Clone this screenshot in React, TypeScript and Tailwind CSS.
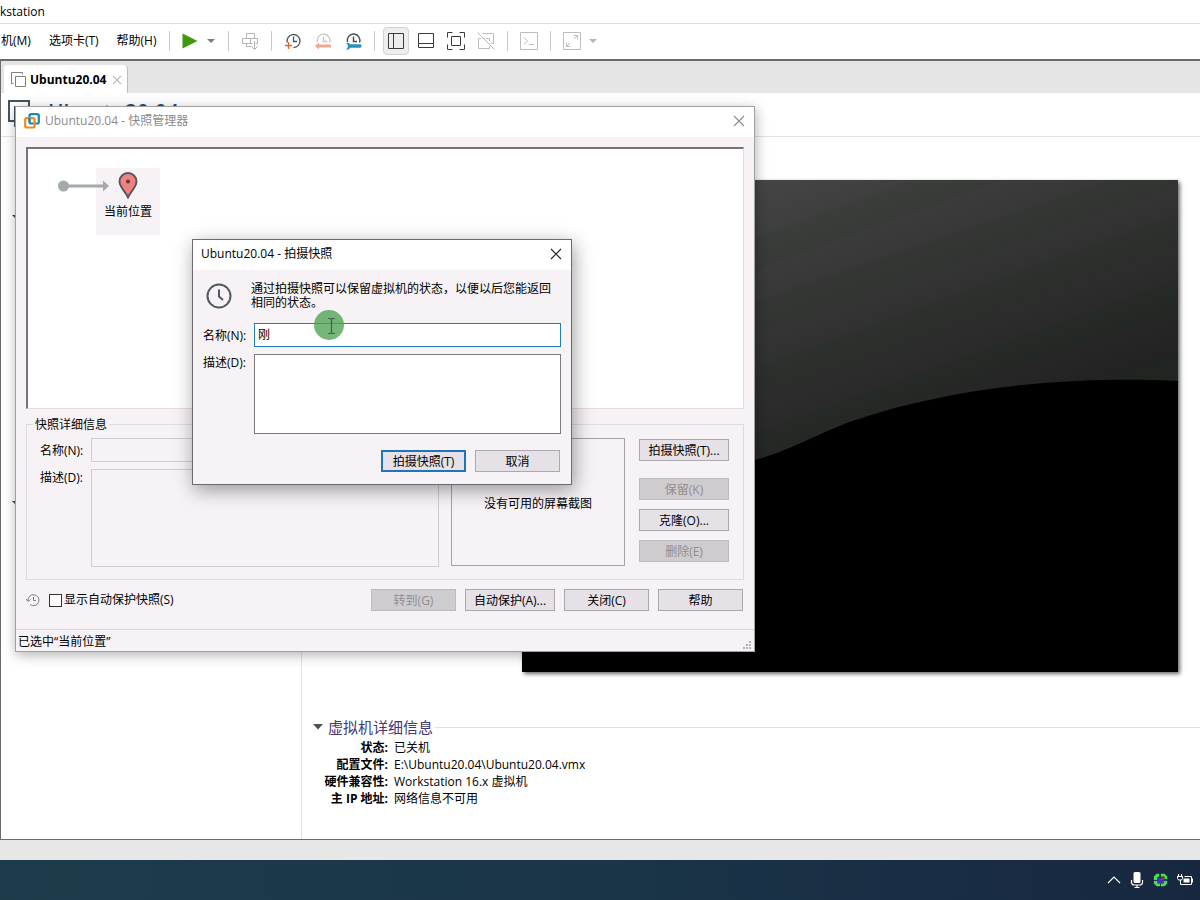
import type { ReactNode } from 'react';

const FONT = "font-['Open_Sans','Noto_Sans_CJK_SC',sans-serif]";

function Separator() {
  return <span className="mx-1.5 h-5 w-px shrink-0 bg-[#c9c9c9]" />;
}

function ToolButton({ label, active, children }: { label: string; active?: boolean; children: ReactNode }) {
  return (
    <span className="flex w-[30px] shrink-0 justify-center">
      <button
        aria-label={label}
        className={
          active
            ? 'flex h-7 w-[26px] items-center justify-center rounded border border-[#d2d2d2] bg-[#ededed]'
            : 'flex h-7 w-[26px] items-center justify-center'
        }
      >
        {children}
      </button>
    </span>
  );
}

function Icon({ stroke, children }: { stroke: string; children: ReactNode }) {
  return (
    <svg width="20" height="20" viewBox="0 0 20 20" fill="none" stroke={stroke} className="shrink-0">
      {children}
    </svg>
  );
}

function Caret({ color }: { color: string }) {
  return (
    <svg width="8" height="4" viewBox="0 0 8 4">
      <path d="M0 0h8L4 4z" fill={color} />
    </svg>
  );
}

function Toolbar() {
  return (
    <nav className="flex h-9 shrink-0 items-center border-t border-[#dedede] bg-white pb-px">
      <button className="pl-px">机(M)</button>
      <button className="ml-[18px]">选项卡(T)</button>
      <button className="ml-[18px]">帮助(H)</button>
      <span className="ml-3 h-5 w-px shrink-0 bg-[#c9c9c9]" />
      <button aria-label="启动" className="pl-3">
        <svg width="16" height="16" viewBox="0 0 16 16">
          <path d="M0.500 0.500v15L15.500 8z" fill="#3f9a0a" />
        </svg>
      </button>
      <button aria-label="电源选项" className="flex w-6 justify-center pl-0.5">
        <Caret color="#7d7d7d" />
      </button>
      <Separator />
      <ToolButton label="发送">
        <Icon stroke="#b5b5b5">
          <path d="M6.500 7.500v-5h8v5M12.500 12.500h-10v-5h15v5h-2M10.500 7.500v5M6.500 12.500v3h5M14.500 10v8M11.500 15.500l3 3 3-3" />
        </Icon>
      </ToolButton>
      <Separator />
      <ToolButton label="拍摄快照">
        <Icon stroke="#4d5258">
          <path d="M4.200 11.500A6.500 6.500 0 1 1 10.500 16.500" strokeWidth="1.300" />
          <path d="M10.500 5.500v5H14" strokeWidth="1.300" />
          <path d="M5.500 11v7M2 14.500h7" stroke="#e2632f" strokeWidth="1.400" />
        </Icon>
      </ToolButton>
      <ToolButton label="恢复快照">
        <Icon stroke="#c2c6c9">
          <path d="M4.500 11A6.300 6.300 0 1 1 16.500 11.500" strokeWidth="1.300" />
          <path d="M10.500 5.500v5H14" strokeWidth="1.300" />
          <path d="M2 15l4-3.500v2h12v3H6v2z" fill="#f2a78f" stroke="none" />
        </Icon>
      </ToolButton>
      <ToolButton label="管理快照">
        <Icon stroke="#3d4a52">
          <path d="M4.500 11A6.300 6.300 0 1 1 16.500 11.500" strokeWidth="1.400" />
          <path d="M10.500 5.500v5H14" strokeWidth="1.400" />
          <path d="M3 12h2.500l2 1.300H17a1.700 1.700 0 0 1 0 3.400H7.500L5.500 18.500H3l1.800-2v-2.500z" fill="#2c8fbd" stroke="none" />
        </Icon>
      </ToolButton>
      <Separator />
      <ToolButton label="侧栏" active>
        <Icon stroke="#3b3b3b">
          <path d="M2.500 2.500h15v15h-15zM7.500 2.500v15" />
        </Icon>
      </ToolButton>
      <ToolButton label="缩略图栏">
        <Icon stroke="#3b3b3b">
          <path d="M2.500 2.500h15v14h-15zM2.500 12.500h15" />
        </Icon>
      </ToolButton>
      <ToolButton label="全屏">
        <Icon stroke="#3b3b3b">
          <path d="M1.500 6.500v-5h5M13.500 1.500h5v5M18.500 13.500v5h-5M6.500 18.500h-5v-5M5.500 5.500h9v9h-9z" />
        </Icon>
      </ToolButton>
      <ToolButton label="Unity 模式">
        <Icon stroke="#bdbdbd">
          <path d="M6.500 2.500h11v10H15M5 7.500H2.500v10h11V15M7.500 7.500h1M10 7.500h3.500V10M1.500 1.500l17 17" />
        </Icon>
      </ToolButton>
      <Separator />
      <ToolButton label="控制台">
        <Icon stroke="#bdbdbd">
          <path d="M1.500 1.500h17v17h-17zM5 6.500l3.500 3.500L5 13.500M10 13.500h5" />
        </Icon>
      </ToolButton>
      <Separator />
      <ToolButton label="拉伸">
        <Icon stroke="#bdbdbd">
          <path d="M1.500 1.500h17v17h-17zM11.500 4.500h4v4M15 5l-3 3M4.500 11.500v4h4M5 15l3-3" />
        </Icon>
      </ToolButton>
      <button aria-label="拉伸选项" className="flex w-3 justify-center">
        <Caret color="#b5b5b5" />
      </button>
    </nav>
  );
}

function PreviewImage() {
  return (
    <svg
      viewBox="0 0 656 492"
      className="mr-[22px] ml-[220px] block shadow-[2px_2px_4px_rgba(0,0,0,0.6)]"
      role="img"
      aria-label="虚拟机屏幕"
    >
      <defs>
        <linearGradient id="sky" gradientUnits="userSpaceOnUse" x1="260" y1="-10" x2="360" y2="270">
          <stop offset="0" stopColor="#454545" />
          <stop offset="1" stopColor="#222322" />
        </linearGradient>
      </defs>
      <rect width="656" height="492" fill="#000" />
      <path d="M0 0H656V201C560 196 440 204 330 241C290 256 270 270 232 280L0 370Z" fill="url(#sky)" />
      <g fill="#1c341c" fillOpacity="0.11">
        <path d="M232 58L390 0H480L232 90Z" />
        <path d="M232 122L590 0H656V6L232 154Z" />
        <path d="M232 188L656 34V66L232 220Z" />
        <path d="M232 254L656 100V132L290 256L232 280Z" />
        <path d="M580 198L656 172V201Z" />
      </g>
    </svg>
  );
}

const details = [
  ['状态:', '已关机'],
  ['配置文件:', 'E:\\Ubuntu20.04\\Ubuntu20.04.vmx'],
  ['硬件兼容性:', 'Workstation 16.x 虚拟机'],
  ['主 IP 地址:', '网络信息不可用'],
];

function MainWindow() {
  return (
    <div className="flex flex-1 flex-col">
      <header className="flex h-[23px] shrink-0 items-center bg-white">kstation</header>
      <Toolbar />
      <div className="flex flex-1 flex-col border-t-2 border-l border-[#6a6a6a] bg-white">
        <div className="flex h-8 shrink-0 items-end bg-[#e5e5e5] pl-[3px]">
          <div className="flex h-7 items-center rounded-t border-r border-[#bcbcbc] bg-white pt-px pr-[5px] pl-[7px]">
            <svg width="15" height="15" viewBox="0 0 15 15" fill="none" stroke="#808080">
              <path d="M2.500 11.500h-2V.5h11v2M4.500 4.500h10v10h-10z" />
            </svg>
            <span className="ml-1 font-bold">Ubuntu20.04</span>
            <button aria-label="关闭标签" className="ml-1.5">
              <svg width="10" height="10" viewBox="0 0 11 11" stroke="#b9b9b9" strokeWidth="1.300">
                <path d="M1 1l9 9M10 1l-9 9" />
              </svg>
            </button>
          </div>
        </div>
        <div className="flex h-11 shrink-0 items-start border-b border-[#e2e2e2] pt-1.5 pl-[7px]">
          <svg width="28" height="28" viewBox="0 0 28 28" fill="none" stroke="#46525e" strokeWidth="2">
            <path d="M6 22H1V2h20v5M7 8h20v20H7z" />
          </svg>
          <h1 className="ml-3 text-[21px] leading-[26px] font-semibold text-[#1a5294]">Ubuntu20.04</h1>
        </div>
        <div className="flex flex-1">
          <aside className="flex w-[301px] shrink-0 flex-col gap-[282px] border-r border-[#e2e2e2] pt-[78px] pl-[11px]">
            <Caret color="#3c4650" />
            <Caret color="#3c4650" />
          </aside>
          <main className="flex-1 pt-[43px] pb-6">
            <PreviewImage />
            <section className="mt-11 pl-[11px]">
              <h2 className="flex items-center text-[15px] leading-[22px] text-[#443878]">
                <svg width="10" height="6" viewBox="0 0 10 6" className="mr-[5px]">
                  <path d="M0 0h10L5 5.500z" fill="#4b5258" />
                </svg>
                虚拟机详细信息
                <span className="ml-0.5 h-px flex-1 bg-[#e0e0e0]" />
              </h2>
              <dl className="grid grid-cols-[75px_1fr] gap-x-1.5 pt-px leading-[17px]">
                {details.map(([term, value]) => (
                  <div key={term} className="contents">
                    <dt className="text-right font-bold whitespace-nowrap">{term}</dt>
                    <dd>{value}</dd>
                  </div>
                ))}
              </dl>
            </section>
          </main>
        </div>
      </div>
      <footer className="h-[21px] shrink-0 border-t border-[#6a6a6a] bg-[#e7e7e7]" />
    </div>
  );
}

function Button({ children, width, disabled, primary }: { children: ReactNode; width: string; disabled?: boolean; primary?: boolean }) {
  const tone = disabled
    ? 'border border-[#bfbabf] bg-[#cfcccf] text-[#8f8c8f]'
    : primary
      ? 'border-2 border-[#1f74bd] bg-[#e5e1e6] text-black'
      : 'border border-[#ada8ad] bg-[#e6e1e6] text-black';
  return (
    <button disabled={disabled} className={`${width} ${tone} flex h-[22px] shrink-0 items-center justify-center pt-0.5 whitespace-nowrap`}>
      {children}
    </button>
  );
}

function CloseIcon({ color }: { color: string }) {
  return (
    <svg width="12" height="12" viewBox="0 0 12 12" stroke={color} strokeWidth="1.100">
      <path d="M1 1l10 10M11 1L1 11" />
    </svg>
  );
}

function SnapshotManager() {
  return (
    <div
      role="dialog"
      aria-label="快照管理器"
      className="absolute top-[106px] left-[15px] w-[740px] border border-[#a29ea2] bg-[#f6f2f6] shadow-[1px_3px_12px_rgba(0,0,0,0.3)]"
    >
      <div className="flex h-[30px] items-center bg-white pr-[9px] pb-0.5 pl-2 text-[#8c8c8c]">
        <svg width="16" height="16" viewBox="0 0 16 16" fill="none" strokeWidth="2.200" className="mr-[5px]">
          <rect x="5.500" y="1.200" width="9.300" height="9.300" rx="1.500" stroke="#1b87b0" />
          <rect x="1.200" y="5.200" width="9.300" height="9.300" rx="1.500" stroke="#ee8b1c" />
          <path d="M5.500 9V5" stroke="#1b87b0" />
        </svg>
        <span className="flex-1">Ubuntu20.04 - 快照管理器</span>
        <button aria-label="关闭窗口">
          <CloseIcon color="#8c8c8c" />
        </button>
      </div>
      <div className="px-2.5 pt-2.5">
        <div className="flex h-[262px] items-start border-t-2 border-r border-b border-l-2 border-t-[#777277] border-r-[#e0dce0] border-b-[#e0dce0] border-l-[#777277] bg-white pt-[19px] pl-[30px]">
          <svg width="51" height="12" viewBox="0 0 51 12" className="relative z-10 mt-3 -mr-[13px] shrink-0">
            <circle cx="5.500" cy="6" r="5.500" fill="#a3aaae" />
            <path d="M8 4.500h37V0.500L51 6l-6 5.500V7.500H8z" fill="#a3aaae" />
          </svg>
          <div className="flex h-[67px] w-16 flex-col items-center bg-[#f6f2f6] pt-1">
            <svg width="20" height="27" viewBox="0 0 20 27">
              <path d="M10 25.500C8 20 1.500 15.500 1.500 9.500a8.500 8.500 0 0 1 17 0C18.500 15.500 12 20 10 25.500z" fill="#f28080" stroke="#50565a" strokeWidth="1.800" />
              <circle cx="10" cy="9.500" r="2" fill="#50403f" />
            </svg>
            <span className="mt-[5px] leading-4">当前位置</span>
          </div>
        </div>
        <fieldset className="mt-[7px] h-[164px] border border-[#dedade]">
          <legend className="ml-1.5 h-4 px-0.5 leading-[18px]">快照详细信息</legend>
          <div className="flex items-start pt-1.5 pl-3">
            <div className="grid grid-cols-[52px_348px] gap-y-[7px]">
              <label htmlFor="snap-name" className="pt-1 pl-px">名称(N):</label>
              <input id="snap-name" readOnly className="h-6 border border-[#cfcbcf] bg-transparent px-1" />
              <label htmlFor="snap-desc" className="pl-px">描述(D):</label>
              <textarea id="snap-desc" readOnly className="h-[98px] resize-none border border-[#cfcbcf] bg-transparent px-1" />
            </div>
            <div className="ml-3 flex h-[128px] w-[174px] items-center justify-center border border-[#a5a1a5] pt-1">
              没有可用的屏幕截图
            </div>
            <div className="ml-3.5 flex flex-col gap-[9px] pt-px">
              <div className="mb-2">
                <Button width="w-[90px]">拍摄快照(T)...</Button>
              </div>
              <Button width="w-[90px]" disabled>保留(K)</Button>
              <Button width="w-[90px]">克隆(O)...</Button>
              <Button width="w-[90px]" disabled>删除(E)</Button>
            </div>
          </div>
        </fieldset>
        <div className="mt-[9px] mb-[18px] flex items-center gap-[9px] pr-px">
          <svg width="14" height="14" viewBox="0 0 14 14" fill="none" stroke="#7c8186">
            <path d="M2 8A5.500 5.500 0 1 1 4 11.500M0 6l2 2.500L4.500 6.500M7.500 4v3.500H10" />
          </svg>
          <label className="flex flex-1 items-center gap-0.5">
            <input type="checkbox" className="size-[13px] appearance-none border border-[#333] bg-white" />
            显示自动保护快照(S)
          </label>
          <Button width="w-[85px]" disabled>转到(G)</Button>
          <Button width="w-[90px]">自动保护(A)...</Button>
          <Button width="w-[85px]">关闭(C)</Button>
          <Button width="w-[85px]">帮助</Button>
        </div>
      </div>
      <div className="flex h-[22px] items-end justify-between border-t border-[#d9d5d9] pl-0.5">
        <span>已选中“当前位置”</span>
        <svg width="11" height="11" viewBox="0 0 11 11" fill="#b5b0b5">
          <path d="M6 1h2v2H6zM3 4h2v2H3zM6 4h2v2H6zM0 7h2v2H0zM3 7h2v2H3zM6 7h2v2H6z" />
        </svg>
      </div>
    </div>
  );
}

function TakeSnapshotDialog() {
  return (
    <div
      role="dialog"
      aria-label="拍摄快照"
      className="absolute top-[239px] left-[192px] w-[380px] border border-[#6f6a6f] bg-[#f6f2f6] shadow-[2px_5px_18px_rgba(0,0,0,0.38)]"
    >
      <div className="flex h-[30px] items-center justify-between bg-white pr-[9px] pb-0.5 pl-2">
        <span>Ubuntu20.04 - 拍摄快照</span>
        <button aria-label="取消拍摄">
          <CloseIcon color="#222" />
        </button>
      </div>
      <div className="px-2.5 pt-3 pb-3">
        <div className="flex items-center">
          <svg width="26" height="26" viewBox="0 0 26 26" fill="none" stroke="#4e5a62" strokeWidth="2" className="ml-[3px] shrink-0">
            <circle cx="13" cy="13" r="11.500" />
            <path d="M13 6.500v7l4 3.500" />
          </svg>
          <p className="ml-[19px] leading-[14px]">
            通过拍摄快照可以保留虚拟机的状态，以便以后您能返回
            <br />
            相同的状态。
          </p>
        </div>
        <div className="mt-[13px] grid grid-cols-[51px_1fr] gap-y-[7px]">
          <label htmlFor="new-name" className="pt-1">名称(N):</label>
          <input id="new-name" defaultValue="刚" className="h-6 min-w-0 border border-[#1f7fb5] bg-white px-[3px] pb-0.5 outline-none" />
          <label htmlFor="new-desc">描述(D):</label>
          <textarea id="new-desc" className="h-20 min-w-0 resize-none border border-[#7f7a7f] bg-white px-1 outline-none" />
        </div>
        <div className="mt-4 flex justify-end gap-[9px] pr-px">
          <Button width="w-[85px]" primary>拍摄快照(T)</Button>
          <Button width="w-[85px]">取消</Button>
        </div>
      </div>
    </div>
  );
}

function Pointer() {
  return (
    <svg width="30" height="30" viewBox="0 0 30 30" fill="none" className="pointer-events-none absolute top-[310px] left-[314px]">
      <circle cx="15" cy="15" r="15" fill="#4da352" fillOpacity="0.78" />
      <path d="M14 8.500h2.500l1 1 1-1H21M14 23.500h2.500l1-1 1 1H21M17.500 9.500v13" stroke="#45604a" strokeWidth="1.200" />
    </svg>
  );
}

function Taskbar() {
  return (
    <footer className="flex h-10 shrink-0 items-center justify-end bg-linear-to-r from-[#1c3c4c] via-[#1a3548] to-[#172740] pr-[7px]">
      <button aria-label="显示隐藏的图标">
        <svg width="14" height="8" viewBox="0 0 14 8" fill="none" stroke="#fff" strokeWidth="1.200">
          <path d="M1 7l6-6 6 6" />
        </svg>
      </button>
      <svg width="14" height="16" viewBox="0 0 14 16" fill="none" stroke="#fff" className="ml-[9px]">
        <rect x="3.500" y="0" width="7" height="11" rx="1.500" fill="#fff" stroke="none" />
        <path d="M1.500 8v2.500c0 2 1.500 2.500 3 2.500h5c1.500 0 3-.5 3-2.500V8M7 13v2.500M4.500 15.500h5" strokeWidth="1.200" />
      </svg>
      <svg width="16" height="14" viewBox="0 0 18 14" className="ml-[9px]">
        <path d="M1 3l3-3h9l3 3v8l-3 3H4l-3-3z" fill="#2b3350" />
        <path d="M1 3l3-3h3v3L5 4v3H1zM9 0h4l3 3v3h-3V3H9zM1 8h4v3h3v3H4l-3-3zM12 8h4v3l-3 3H9v-3h3z" fill="#45e04d" />
        <path d="M5 4l3 1 4-1 1 3-2 4-3-1-2 1-1-3z" fill="#3f35b8" />
        <path d="M9 5h3v2H9z" fill="#b1352f" />
      </svg>
      <svg width="16" height="12" viewBox="0 0 16 12" fill="none" stroke="#fff" className="ml-2">
        <path d="M1.500 0v2.500M4.500 0v2.500M0 2.500h6M.5 3v1.500l1 1.500h3l1-1.500V3M3.500 6v4.500h11v-8H7.500M15.500 4.500v4" />
        <path d="M6.500 4.500h6v4h-6z" fill="#fff" stroke="none" />
      </svg>
    </footer>
  );
}

export default function App() {
  return (
    <div className={`${FONT} relative flex min-h-screen flex-col overflow-hidden text-[12px] leading-[18px] text-black`}>
      <MainWindow />
      <Taskbar />
      <SnapshotManager />
      <TakeSnapshotDialog />
      <Pointer />
    </div>
  );
}
